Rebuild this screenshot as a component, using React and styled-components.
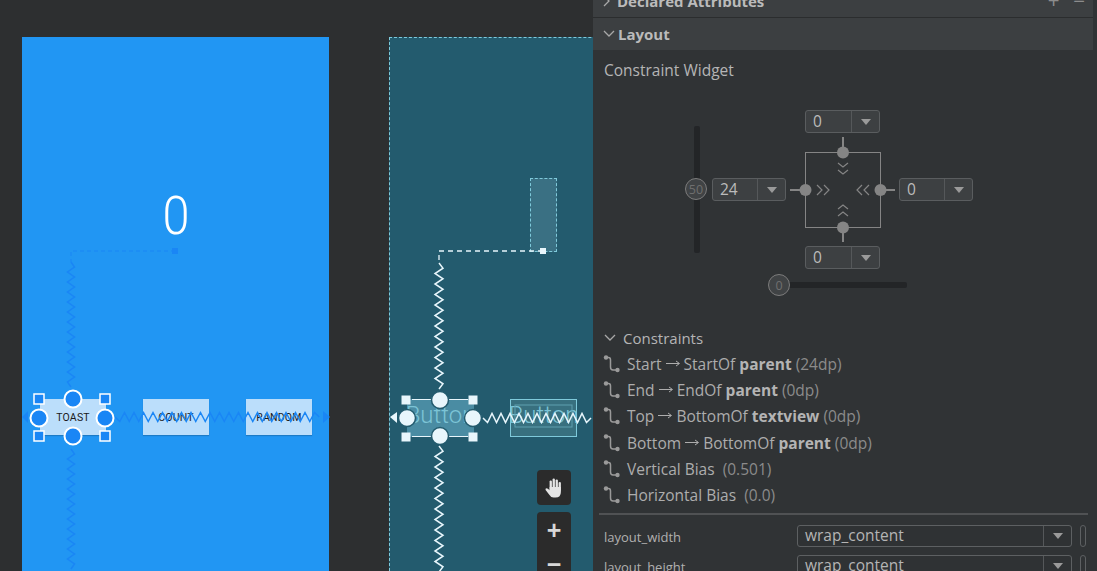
import React from 'react';
import styled, { createGlobalStyle } from 'styled-components';

const UI_FONT = '"Open Sans", "Noto Sans", "Liberation Sans", sans-serif';

const GlobalStyle = createGlobalStyle`
  html, body {
    margin: 0;
    padding: 0;
    width: 1097px;
    height: 571px;
    overflow: hidden;
    background: #2d2f30;
  }
`;

const Page = styled.div`
  display: flex;
  width: 1097px;
  height: 571px;
  overflow: hidden;
  font-family: ${UI_FONT};
`;

/* design surface */
const Canvas = styled.div`
  position: relative;
  display: flex;
  gap: 60px;
  width: 593px;
  flex: none;
  padding: 37px 0 0 22px;
  box-sizing: border-box;
  overflow: hidden;
  background: #2d2f30;
`;

const Phone = styled.div`
  position: relative;
  width: 307px;
  height: 534px;
  flex: none;
  background: #2196f3;
`;

const Blueprint = styled.div`
  position: relative;
  width: 307px;
  height: 534px;
  flex: none;
  box-sizing: border-box;
  background: #235b6e;
  border-left: 1px dashed #7fcadb;
  border-top: 1px dashed #7fcadb;
`;

const Overlay = styled.svg`
  position: absolute;
  left: 0;
  top: 0;
  overflow: visible;
  pointer-events: none;
`;

const Counter = styled.div`
  position: absolute;
  left: 133px;
  top: 149px;
  width: 42px;
  text-align: center;
  font: 300 54px/60px Roboto, sans-serif;
  transform: scaleX(0.9);
  color: #fff;
`;

const PhoneButton = styled.div`
  position: absolute;
  left: ${p => p.$x}px;
  top: 362px;
  width: 66px;
  height: 36px;
  display: flex;
  align-items: center;
  justify-content: center;
  background: #bbdefb;
  box-shadow: 0 1px 1px rgba(0, 0, 0, 0.18);
  color: #1a1a1a;
  font: 400 10.5px Roboto, sans-serif;
  letter-spacing: 0.2px;
`;

const GhostButton = styled.div`
  position: absolute;
  left: ${p => p.$x}px;
  top: 361px;
  width: 67px;
  height: 38px;
  box-sizing: border-box;
  display: flex;
  align-items: center;
  justify-content: center;
  background: ${p => (p.$selected ? '#4a8ca3' : '#38707f')};
  border: ${p => (p.$selected ? 'none' : '1px solid #7fcadb')};
  color: #7cc4d6;
  font: 300 24px/30px Roboto, sans-serif;
  padding-bottom: 6px;
  white-space: nowrap;
`;

const TextGhost = styled.div`
  position: absolute;
  left: 140px;
  top: 140px;
  width: 27px;
  height: 74px;
  box-sizing: border-box;
  background: #3a7083;
  border: 1px dashed #7fcadb;
`;

const ToolBox = styled.div`
  position: absolute;
  left: 537px;
  top: ${p => p.$top}px;
  width: 34px;
  height: ${p => p.$h}px;
  display: flex;
  flex-direction: column;
  align-items: center;
  justify-content: ${p => (p.$stack ? 'flex-start' : 'center')};
  background: #2b2b2b;
  border-radius: 4px;
  color: #d8d8d8;
`;

const ToolSign = styled.div`
  font: 600 25px/32px "Liberation Sans", sans-serif;
  height: 32px;
  margin-top: 2px;
`;

/* attributes panel */
const Panel = styled.div`
  flex: 1;
  min-width: 0;
  height: 571px;
  overflow: hidden;
  background: #303335;
  color: #bbbbbb;
`;

const SectionHeader = styled.div`
  display: flex;
  align-items: center;
  width: 500px;
  height: ${p => p.$h}px;
  margin-top: ${p => p.$mt || 0}px;
  padding-left: 10px;
  box-sizing: border-box;
  background: #3c3f41;
  border-bottom: ${p => (p.$line ? '1px solid #2b2d2e' : 'none')};
  font-size: 15px;
  font-weight: 700;
  color: #bbbbbb;
  gap: 3px;
`;

const HeaderLabel = styled.span`
  margin-left: ${p => p.$indent}px;
`;

const HeaderActions = styled.div`
  display: flex;
  gap: 14px;
  margin-left: auto;
  margin-right: 8px;
  color: #8c8c8c;
  font: 400 20px/20px "Liberation Sans", sans-serif;
`;

const WidgetTitle = styled.div`
  padding: 9px 0 0 11px;
  height: 51px;
  box-sizing: border-box;
  font-size: 15.5px;
  line-height: 22px;
  color: #b5b5b5;
`;

const WidgetGrid = styled.div`
  position: relative;
  display: grid;
  grid-template-columns: 74px 75px 74px;
  grid-template-rows: 23px 75px 23px;
  gap: 19px;
  margin: 9px 0 0 119px;
  width: 261px;
`;

const ValueBox = styled.div`
  grid-column: ${p => p.$col};
  grid-row: ${p => p.$row};
  align-self: center;
  display: flex;
  height: 23px;
  box-sizing: border-box;
  background: #3d4042;
  border: 1px solid #5a5d5f;
  border-radius: 3px;
  font-size: 15.5px;
  line-height: 21px;
  color: #bbbbbb;
`;

const ValueText = styled.div`
  flex: 1;
  padding-left: 7px;
  border-right: 1px solid #55585a;
`;

const Caret = styled.div`
  width: 27px;
  display: flex;
  align-items: center;
  justify-content: center;
  &::after {
    content: '';
    border-left: 5.5px solid transparent;
    border-right: 5.5px solid transparent;
    border-top: 6px solid #9a9a9a;
  }
`;

const BoxDiagram = styled.svg`
  grid-column: 2;
  grid-row: 2;
  overflow: visible;
`;

const SliderV = styled.div`
  position: absolute;
  left: -18px;
  top: 16px;
  width: 6px;
  height: 127px;
  background: #232527;
  border-radius: 2px;
`;

const SliderH = styled.div`
  position: absolute;
  left: 67px;
  top: 172px;
  width: 128px;
  height: 6px;
  background: #232527;
  border-radius: 2px;
`;

const Knob = styled.div`
  position: absolute;
  left: ${p => p.$x}px;
  top: ${p => p.$y}px;
  width: 22px;
  height: 22px;
  box-sizing: border-box;
  display: flex;
  align-items: center;
  justify-content: center;
  border: 1px solid #7c7c7c;
  border-radius: 50%;
  background: #404345;
  color: #6f6f6f;
  font-size: 12.5px;
`;

const ConstraintTitle = styled.div`
  display: flex;
  align-items: center;
  gap: 7px;
  margin: 58px 0 0 11px;
  height: 22px;
  font-size: 15px;
  color: #b5b5b5;
`;

const ConstraintList = styled.div`
  display: flex;
  flex-direction: column;
  margin: 2px 0 0 10px;
`;

const ConstraintRow = styled.div`
  display: flex;
  align-items: center;
  gap: 6px;
  height: 26.2px;
  font-size: 15.5px;
  color: #adadad;
  white-space: pre;
  b {
    font-weight: 700;
    color: #b4b4b4;
  }
  i {
    font-style: normal;
    color: #8b8b8b;
  }
`;

const ArrowIcon = styled.svg`
  vertical-align: 3px;
`;

const Divider = styled.div`
  width: 489px;
  height: 2px;
  margin: 5px 0 0 6px;
  background: #505254;
`;

const PropRow = styled.div`
  display: flex;
  align-items: center;
  height: 22px;
  margin: ${p => p.$mt}px 0 0 11px;
`;

const PropLabel = styled.div`
  width: 193px;
  flex: none;
  font-size: 13px;
  color: #b0b0b0;
  position: relative;
  top: 1px;
`;

const PropSelect = styled.div`
  display: flex;
  width: 275px;
  height: 22px;
  flex: none;
  box-sizing: border-box;
  background: #2f3234;
  border: 1px solid #5d6062;
  border-radius: 3px;
  font-size: 15.5px;
  line-height: 19px;
  color: #b5b5b5;
`;

const PropFlag = styled.div`
  width: 6px;
  height: 22px;
  flex: none;
  margin-left: 8px;
  box-sizing: border-box;
  border: 1px solid #5d6062;
  border-radius: 3px;
`;

// a wavy spring between two points, drawn along one axis
const zigzag = (x1, y1, x2, y2, period, amp) => {
  const vertical = x1 === x2;
  const length = vertical ? y2 - y1 : x2 - x1;
  const steps = Math.floor(length / (period / 2));
  let d = `M${x1} ${y1}`;
  for (let i = 1; i <= steps; i++) {
    const along = (i * period) / 2;
    const off = i === steps ? 0 : (i % 2 ? amp : -amp);
    d += vertical ? ` L${x1 + off} ${y1 + along}` : ` L${x1 + along} ${y1 + off}`;
  }
  return d;
};

const Chevrons = ({ d, stroke = '#858585' }) => (
  <path d={d} fill="none" stroke={stroke} strokeWidth="1.2" />
);

const SpringIcon = () => (
  <svg width="18" height="20" viewBox="0 0 18 20">
    <circle cx="3" cy="3.5" r="2.2" fill="#9a9a9a" />
    <circle cx="14.5" cy="16" r="2.2" fill="#9a9a9a" />
    <path d="M3 3.5 H5.5 Q7.5 3.5 7.5 6 V13 Q7.5 16 10 16 H14.5" fill="none" stroke="#9a9a9a" strokeWidth="1.5" />
  </svg>
);

const Arrow = () => (
  <ArrowIcon width="14" height="7" viewBox="0 0 14 7">
    <path d="M0 3.5 H13 M10 1 L13.5 3.5 L10 6" fill="none" stroke="#adadad" strokeWidth="1" />
  </ArrowIcon>
);

const ChevronDown = () => (
  <svg width="12" height="8" viewBox="0 0 12 8">
    <path d="M1 1 L6 6 L11 1" fill="none" stroke="#a8a8a8" strokeWidth="1.3" />
  </svg>
);

const ChevronRight = () => (
  <svg width="8" height="12" viewBox="0 0 8 12">
    <path d="M1 1 L6 6 L1 11" fill="none" stroke="#a8a8a8" strokeWidth="1.3" />
  </svg>
);

const HandIcon = () => (
  <svg width="20" height="22" viewBox="0 0 20 22" fill="#e4e4e4">
    <rect x="5.6" y="3.5" width="2.3" height="10" rx="1.1" />
    <rect x="8.6" y="1.5" width="2.3" height="11" rx="1.1" />
    <rect x="11.6" y="2.5" width="2.3" height="10" rx="1.1" />
    <rect x="14.6" y="5" width="2.3" height="9" rx="1.1" />
    <path d="M5.6 10 H16.9 V15 Q16.9 20.5 11.5 20.5 H9.5 Q7 20.5 5.5 18 L1.6 13 Q1 11.4 2.6 11.2 Q3.8 11.2 5.6 13.2 Z" />
  </svg>
);

const valueBoxes = [
  { col: 2, row: 1, value: '0' },
  { col: 1, row: 2, value: '24' },
  { col: 3, row: 2, value: '0' },
  { col: 2, row: 3, value: '0' },
];

const constraints = [
  { label: 'Start', target: 'StartOf ', bold: 'parent', note: '(24dp)' },
  { label: 'End', target: 'EndOf ', bold: 'parent', note: '(0dp)' },
  { label: 'Top', target: 'BottomOf ', bold: 'textview', note: '(0dp)' },
  { label: 'Bottom', target: 'BottomOf ', bold: 'parent', note: '(0dp)' },
];

const phoneButtons = [
  { x: 18, label: 'TOAST' },
  { x: 121, label: 'COUNT' },
  { x: 224, label: 'RANDOM' },
];

const PhoneMarks = () => {
  const blue = '#1a86f5';
  const circles = [[17, 381], [83, 381], [51, 362], [51, 399]];
  const squares = [[17, 362], [83, 362], [17, 399], [83, 399]];
  return (
    <Overlay width="307" height="534">
      <path d="M153 214 H49 V225" fill="none" stroke={blue} strokeWidth="1" strokeDasharray="4 3" />
      <rect x="150" y="211" width="6" height="6" fill={blue} />
      <path d={zigzag(49, 225, 49, 354, 10, 3.5)} fill="none" stroke={blue} strokeWidth="1.5" />
      <path d={zigzag(49, 412, 49, 534, 10, 3.5)} fill="none" stroke={blue} strokeWidth="1.5" />
      <path d={zigzag(93, 380, 300, 380, 9.5, 4.5)} fill="none" stroke={blue} strokeWidth="1.5" />
      <path d="M301 374 L308 380 L301 386 Z" fill={blue} />
      <path d="M6 374 L0 380 L6 386 Z" fill={blue} />
      {squares.map(([x, y]) => (
        <rect key={`${x}-${y}`} x={x - 5} y={y - 5} width="10" height="10" fill={blue} stroke="#fff" strokeWidth="1.5" />
      ))}
      {circles.map(([x, y]) => (
        <circle key={`${x}-${y}`} cx={x} cy={y} r="8.5" fill={blue} stroke="#fff" strokeWidth="2" />
      ))}
    </Overlay>
  );
};

const BlueprintMarks = () => {
  const light = '#e8f6fc';
  const dark = '#235b6e';
  const circles = [[17, 380], [83, 380], [50, 362], [50, 398]];
  const squares = [[16, 362], [83, 362], [16, 399], [83, 399]];
  return (
    <Overlay width="307" height="534">
      <path d="M153 213 H49 V225" fill="none" stroke={light} strokeWidth="1.3" strokeDasharray="5 4" />
      <rect x="150" y="210" width="6" height="6" fill={light} />
      <rect x="125" y="367" width="57" height="22" fill="none" stroke="#5f9fb0" />
      <path d={zigzag(49, 225, 49, 351, 10.5, 4)} fill="none" stroke={light} strokeWidth="1.5" />
      <path d={zigzag(49, 408, 49, 534, 10.5, 4)} fill="none" stroke={light} strokeWidth="1.5" />
      <path d={zigzag(93, 380, 204, 380, 9, 4.5)} fill="none" stroke={light} strokeWidth="1.5" />
      <path d="M7 374 L0 379 L7 385 Z" fill={light} />
      <path d="M22 361.5 H78 M22 398.5 H78" stroke={light} strokeWidth="1" />
      {squares.map(([x, y]) => (
        <rect key={`${x}-${y}`} x={x - 4.5} y={y - 4.5} width="9" height="9" fill={light} />
      ))}
      {circles.map(([x, y]) => (
        <circle key={`${x}-${y}`} cx={x} cy={y} r="8.5" fill={light} stroke={dark} strokeWidth="1.5" />
      ))}
    </Overlay>
  );
};

const ConstraintBox = () => (
  <BoxDiagram width="75" height="75" viewBox="0 0 75 75">
    <rect x="0.5" y="0.5" width="75" height="75" fill="none" stroke="#858585" strokeWidth="1" />
    <path d="M38 -15 V0 M38 75 V90 M-15 38 H0 M75 38 H90" stroke="#858585" strokeWidth="2" />
    <circle cx="38" cy="0.5" r="6" fill="#858585" />
    <circle cx="38" cy="75.5" r="6" fill="#858585" />
    <circle cx="0.5" cy="38" r="6" fill="#858585" />
    <circle cx="75.5" cy="38" r="6" fill="#858585" />
    <Chevrons d="M33 11 L38 15 L43 11 M33 18 L38 22 L43 18" />
    <Chevrons d="M33 57 L38 53 L43 57 M33 64 L38 60 L43 64" />
    <Chevrons d="M12 33 L17 38 L12 43 M19 33 L24 38 L19 43" />
    <Chevrons d="M57 33 L52 38 L57 43 M64 33 L59 38 L64 43" />
  </BoxDiagram>
);

export default function App() {
  return (
    <Page>
      <GlobalStyle />
      <Canvas>
        <Phone>
          <Counter>0</Counter>
          {phoneButtons.map(b => (
            <PhoneButton key={b.label} $x={b.x}>{b.label}</PhoneButton>
          ))}
          <PhoneMarks />
        </Phone>
        <Blueprint>
          <TextGhost />
          <GhostButton $x={17} $selected>Button</GhostButton>
          <GhostButton $x={120}>Button</GhostButton>
          <BlueprintMarks />
        </Blueprint>
        <ToolBox $top={470} $h={35}><HandIcon /></ToolBox>
        <ToolBox $top={512} $h={70} $stack>
          <ToolSign>+</ToolSign>
          <ToolSign>−</ToolSign>
        </ToolBox>
      </Canvas>

      <Panel>
        <SectionHeader $h={34} $mt={-16} $line>
          <ChevronRight />
          <HeaderLabel $indent={3}>Declared Attributes</HeaderLabel>
          <HeaderActions>
            <span>+</span>
            <span>−</span>
          </HeaderActions>
        </SectionHeader>
        <SectionHeader $h={32}>
          <ChevronDown />
          <HeaderLabel $indent={0}>Layout</HeaderLabel>
        </SectionHeader>
        <WidgetTitle>Constraint Widget</WidgetTitle>
        <WidgetGrid>
          <SliderV />
          <Knob $x={-27} $y={68}>50</Knob>
          <SliderH />
          <Knob $x={56} $y={164}>0</Knob>
          {valueBoxes.map(v => (
            <ValueBox key={`${v.col}-${v.row}`} $col={v.col} $row={v.row}>
              <ValueText>{v.value}</ValueText>
              <Caret />
            </ValueBox>
          ))}
          <ConstraintBox />
        </WidgetGrid>

        <ConstraintTitle>
          <ChevronDown />
          Constraints
        </ConstraintTitle>
        <ConstraintList>
          {constraints.map(c => (
            <ConstraintRow key={c.label}>
              <SpringIcon />
              <span>{c.label} <Arrow /> {c.target}<b>{c.bold}</b> <i>{c.note}</i></span>
            </ConstraintRow>
          ))}
          <ConstraintRow>
            <SpringIcon />
            <span>Vertical Bias  <i>(0.501)</i></span>
          </ConstraintRow>
          <ConstraintRow>
            <SpringIcon />
            <span>Horizontal Bias  <i>(0.0)</i></span>
          </ConstraintRow>
        </ConstraintList>
        <Divider />
        <PropRow $mt={10}>
          <PropLabel>layout_width</PropLabel>
          <PropSelect>
            <ValueText>wrap_content</ValueText>
            <Caret />
          </PropSelect>
          <PropFlag />
        </PropRow>
        <PropRow $mt={8}>
          <PropLabel>layout_height</PropLabel>
          <PropSelect>
            <ValueText>wrap_content</ValueText>
            <Caret />
          </PropSelect>
          <PropFlag />
        </PropRow>
      </Panel>
    </Page>
  );
}
